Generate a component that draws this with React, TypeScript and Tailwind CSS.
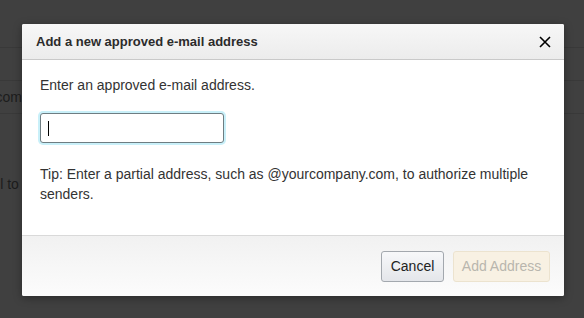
import React from 'react';

const rows = [
  { text: '', h: 'h-[48px]', pr: 'pr-[562px]' },
  { text: '', h: 'h-[33px]', pr: 'pr-[562px]' },
  { text: 'rs@yourcompany.com', h: 'h-[33px]', pr: 'pr-[562px]' },
  { text: '', h: 'h-[56px] border-transparent', pr: 'pr-[562px]' },
  { text: 'Messages from approved senders will be sent by e-mail to your', h: 'h-[30px] border-transparent', pr: 'pr-[534px]' },
];

export default function App() {
  return (
    <div
      className="relative w-[584px] h-[318px] overflow-hidden bg-[#404040] text-[#333]"
      style={{ fontFamily: '"Liberation Sans", Arial, sans-serif' }}
    >
      {/* page behind overlay */}
      <div className="flex flex-col">
        {rows.map((r, i) => (
          <div
            key={i}
            className={`${r.h} ${r.pr} flex items-center justify-end border-b border-[#393939] text-[14px] text-[#1c1c1c] whitespace-nowrap`}
          >
            {r.text}
          </div>
        ))}
      </div>

      {/* dialog */}
      <div className="absolute left-[22px] top-[24px] w-[542px] h-[272px] flex flex-col bg-white rounded-[2px] shadow-[0_2px_8px_rgba(0,0,0,0.35)] overflow-hidden">
        <div className="h-[36px] flex items-center justify-between pl-[14px] pr-[14px] bg-gradient-to-b from-[#f7f7f7] to-[#ececec] border-b border-[#c9c9c9]">
          <span className="text-[13px] font-bold text-[#2b2b2b]">Add a new approved e-mail address</span>
          <svg width="12" height="12" viewBox="0 0 12 12" className="mr-[-1px]">
            <path d="M1 1L11 11M11 1L1 11" stroke="#000" strokeWidth="1.6" />
          </svg>
        </div>

        <div className="flex-1 pl-[18px] pr-[18px] pt-[15px]">
          <p className="text-[14px] leading-[20px]">Enter an approved e-mail address.</p>
          <div className="mt-[16px] ml-[-2px] w-[188px] h-[34px] rounded-[5px] bg-[#c9f0f9] p-[2px]">
            <div className="w-full h-full rounded-[3px] border border-[#6e7d82] bg-white flex items-center pl-[7px]">
              <div className="w-[1px] h-[15px] bg-black" />
            </div>
          </div>
          <p className="mt-[19px] text-[14px] leading-[20px] text-[#333]">
            Tip: Enter a partial address, such as @yourcompany.com, to authorize multiple senders.
          </p>
        </div>

        <div className="h-[61px] flex items-center justify-end gap-[9px] pr-[14px] border-t border-[#d9d9d9] bg-gradient-to-b from-[#f1f1f1] to-[#fcfcfc]">
          <button className="h-[31px] w-[63px] rounded-[3px] border border-[#a3a8ae] bg-gradient-to-b from-[#f7f8fa] to-[#e4e6ea] text-[14px] text-[#222]">
            Cancel
          </button>
          <button className="h-[31px] w-[97px] rounded-[3px] border border-[#ece3cf] bg-[#f8f1e3] text-[14px] text-[#b9b6ae]">
            Add Address
          </button>
        </div>
      </div>
    </div>
  );
}
